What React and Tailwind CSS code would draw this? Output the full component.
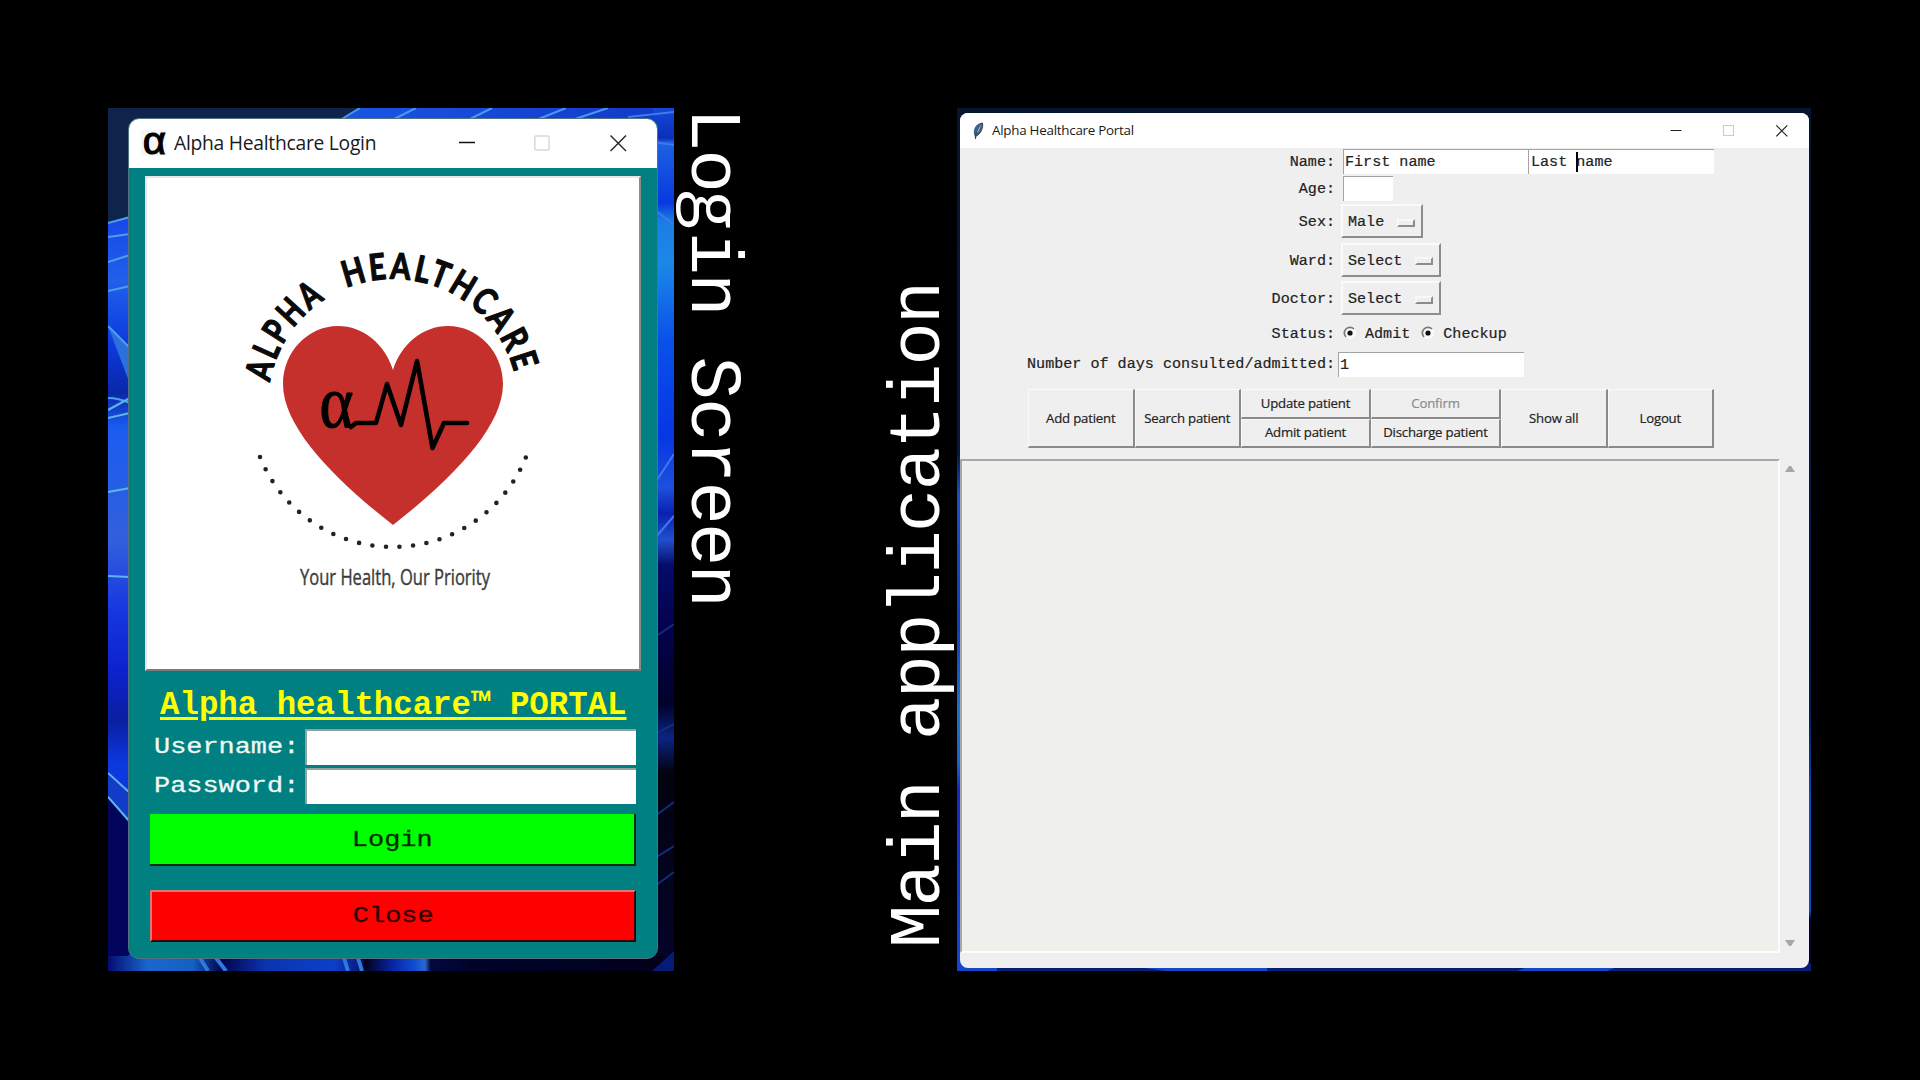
import React from "react";

const mono = "font-['Liberation_Mono',monospace]";
const sans = "font-['Open_Sans',sans-serif]";

function LoginWallpaper() {
  return (
    <svg className="absolute inset-0 h-full w-full" viewBox="0 0 566 863" preserveAspectRatio="none">
      <defs>
        <linearGradient id="wl" x1="0" y1="0" x2="0" y2="1">
          <stop offset="0.13" stopColor="#1748e8" />
          <stop offset="0.2" stopColor="#2060ea" />
          <stop offset="0.27" stopColor="#0d3be0" />
          <stop offset="0.33" stopColor="#0a28a8" />
          <stop offset="0.37" stopColor="#1a5cf0" />
          <stop offset="0.5" stopColor="#3260dc" />
          <stop offset="0.58" stopColor="#1738e0" />
          <stop offset="0.65" stopColor="#0c22d0" />
          <stop offset="0.71" stopColor="#0a1fa0" />
          <stop offset="0.76" stopColor="#0c38e0" />
        </linearGradient>
        <linearGradient id="wr" x1="0" y1="0" x2="0" y2="1">
          <stop offset="0" stopColor="#1448d8" />
          <stop offset="0.035" stopColor="#0b30b8" />
          <stop offset="0.04" stopColor="#1d62e0" />
          <stop offset="0.11" stopColor="#0838e0" />
          <stop offset="0.13" stopColor="#1b7de4" />
          <stop offset="0.18" stopColor="#1c88e6" />
          <stop offset="0.27" stopColor="#0a50ea" />
          <stop offset="0.38" stopColor="#0636e4" />
          <stop offset="0.44" stopColor="#1d50dc" />
          <stop offset="0.47" stopColor="#0a20b0" />
          <stop offset="0.5" stopColor="#2050d0" />
          <stop offset="0.53" stopColor="#050c68" />
          <stop offset="0.6" stopColor="#02024e" />
          <stop offset="0.69" stopColor="#01012c" />
          <stop offset="0.73" stopColor="#0a2480" />
          <stop offset="0.77" stopColor="#020210" />
          <stop offset="1" stopColor="#02042a" />
        </linearGradient>
        <linearGradient id="wt" x1="0" y1="0" x2="1" y2="0">
          <stop offset="0" stopColor="#1c70e8" />
          <stop offset="0.4" stopColor="#1a55e6" />
          <stop offset="1" stopColor="#1238c8" />
        </linearGradient>
        <linearGradient id="wb" x1="0" y1="0" x2="1" y2="0">
          <stop offset="0" stopColor="#040c70" />
          <stop offset="0.07" stopColor="#1a66cc" />
          <stop offset="0.15" stopColor="#1560c4" />
          <stop offset="0.2" stopColor="#02044c" />
          <stop offset="0.28" stopColor="#0a34b0" />
          <stop offset="0.4" stopColor="#0c40c8" />
          <stop offset="0.44" stopColor="#0a1c88" />
          <stop offset="0.455" stopColor="#01011c" />
          <stop offset="0.5" stopColor="#0822a0" />
          <stop offset="0.54" stopColor="#104ad0" />
          <stop offset="0.56" stopColor="#2a68d0" />
          <stop offset="0.57" stopColor="#03083c" />
          <stop offset="0.65" stopColor="#01012a" />
          <stop offset="1" stopColor="#01011a" />
        </linearGradient>
      </defs>
      <rect width="566" height="863" fill="#02044e" />
      <rect x="0" y="0" width="30" height="863" fill="url(#wl)" />
      <path d="M0 0H30V106L0 115Z" fill="#0e244a" />
      <path d="M0 689L30 720V840L0 863Z" fill="#03045c" />
      <path d="M0 665L24 684V716L0 690Z" fill="#123cc8" />
      <path d="M0 218L22 240V276Z" fill="#2b70dc" />
      <g stroke="#4f9fe8" strokeWidth="2" fill="none">
        <path d="M0 115L22 109M0 129L22 126M0 154L22 147M0 183L22 178M0 218L22 240M0 290Q10 290 22 295" />
        <path d="M0 302L22 290M0 310L22 305M0 384L22 380M0 468L22 469M0 665L22 685M0 689L22 714" stroke="#5cb6ec" />
      </g>
      <rect x="0" y="0" width="566" height="14" fill="url(#wt)" />
      <path d="M0 0H250L232 14H0Z" fill="#0e244a" />
      <path d="M252 0L232 12M308 0L284 12M384 0L360 12M458 0L428 12M500 0L464 12" stroke="#4a98f0" strokeWidth="2" />
      <rect x="545" y="0" width="21" height="863" fill="url(#wr)" />
      <g stroke="#3f7ae8" strokeWidth="2" fill="none">
        <path d="M520 9L566 4M545 34L566 37M547 102L566 117M547 375L566 346M547 430L566 408" />
        <path d="M547 529L566 516M547 626L566 616M547 708L566 694M547 750L566 738M547 778L566 764" stroke="#142a7c" />
      </g>
      <rect x="0" y="848" width="566" height="15" fill="url(#wb)" />
      <path d="M92 850L100 863M108 850L118 863M236 850L240 863M250 850L254 863" stroke="#2f78dc" strokeWidth="4" />
      <path d="M544 863L566 843V863Z" fill="#061a78" />
    </svg>
  );
}

function Controls({ big }) {
  return big ? (
    <svg className="h-[50px] w-[200px]" viewBox="457 118 200 50">
      <path d="M459 142.5H475" stroke="#111" strokeWidth="1.4" />
      <rect x="534.8" y="136" width="14.2" height="14" rx="1" fill="none" stroke="#d8d8d8" strokeWidth="1.5" />
      <path d="M610.5 135.5L626 151M626 135.5L610.5 151" stroke="#222" strokeWidth="1.4" />
    </svg>
  ) : (
    <svg className="h-[35px] w-[149px]" viewBox="1660 113 149 35">
      <path d="M1670.5 130.5H1681.5" stroke="#222" strokeWidth="1.1" />
      <rect x="1723.5" y="125.5" width="10" height="10" fill="none" stroke="#ccc" strokeWidth="1.1" />
      <path d="M1776.3 125.3L1787.3 136.3M1787.3 125.3L1776.3 136.3" stroke="#222" strokeWidth="1.2" />
    </svg>
  );
}

function Logo() {
  return (
    <svg className="block h-full w-full" viewBox="147 177 492 491">
      <defs>
        <path id="arcA" d="M269.9 381.3A125 125 0 0 1 328.7 295.9" />
        <path id="arcH" d="M346.2 287.1A125 125 0 0 1 515.6 377" />
      </defs>
      <g fontFamily="Lato" fontWeight="700" fontSize="36" letterSpacing="3.5" fill="#0a0a0a" stroke="#0a0a0a" strokeWidth="1.3" strokeLinejoin="round">
        <text textLength="105" lengthAdjust="spacingAndGlyphs">
          <textPath href="#arcA" textLength="105" lengthAdjust="spacingAndGlyphs">ALPHA</textPath>
        </text>
        <text textLength="215" lengthAdjust="spacingAndGlyphs">
          <textPath href="#arcH" textLength="215" lengthAdjust="spacingAndGlyphs">HEALTHCARE</textPath>
        </text>
      </g>
      <path
        d="M393 369C385 343 363 325 338 325C308 325 283 351 283 383C283 428 338 481 393 524C448 481 503 428 503 383C503 351 478 325 448 325C423 325 401 343 393 369Z"
        fill="#c5302c"
      />
      <text x="319.5" y="426" fontFamily="Liberation Serif" fontSize="74" textLength="34" lengthAdjust="spacingAndGlyphs" stroke="#000" strokeWidth="1.2">
        α
      </text>
      <path d="M351 426L356 422H376L387 383L401 424L417 360L432.5 447L444 422H467" fill="none" stroke="#000" strokeWidth="4.6" strokeLinecap="round" strokeLinejoin="round" />
      <path d="M260 456A143.3 143.3 0 0 0 526 456" fill="none" stroke="#222" strokeWidth="4.6" strokeLinecap="round" strokeDasharray="0 13.6" />
      <text x="300" y="584" fontFamily="Open Sans" fontSize="21" textLength="190" lengthAdjust="spacingAndGlyphs" fill="#3c3c3c" stroke="#3c3c3c" strokeWidth="0.4">
        Your Health, Our Priority
      </text>
    </svg>
  );
}

function CourierText({ children, className = "" }) {
  return (
    <span className={`inline-block scale-x-[1.18] whitespace-pre text-[22.8px] leading-none [-webkit-text-stroke:0.3px] ${mono} ${className}`}>{children}</span>
  );
}

function Field({ label }) {
  return (
    <div className="flex h-[39px] items-center">
      <label className="w-[155px] pt-px pl-1 text-[#f0f8f4]">
        <CourierText className="origin-left">{label}</CourierText>
      </label>
      <div className="h-[36px] w-[331px] border-t-2 border-l-2 border-[#8fa3a3] bg-white" />
    </div>
  );
}

function LoginWindow() {
  return (
    <div className="relative h-[863px] w-[566px] shrink-0 pt-[10px] pl-[20px]">
      <LoginWallpaper />
      <div className="relative h-[841px] w-[530px] overflow-hidden rounded-[11px] border border-[#4d7480] bg-[#008080]">
        <div className="-mx-px -mt-px flex h-[50px] items-center bg-white">
          <svg className="ml-[13px] h-[26px] w-[25px] overflow-visible" viewBox="0 0 25 26">
            <rect width="25" height="26" fill="#f7f7f7" />
            <text x="1" y="24" fontFamily="Liberation Mono" fontSize="39" textLength="24" lengthAdjust="spacingAndGlyphs" fill="#000" stroke="#000" strokeWidth="1.2">
              α
            </text>
          </svg>
          <span className={`ml-[8px] text-[19.3px] leading-none tracking-[-0.27px] text-[#1a1a1a] ${sans}`}>Alpha Healthcare Login</span>
          <span className="mr-px ml-auto">
            <Controls big />
          </span>
        </div>
        <div className="mt-[8px] ml-[16px] h-[495px] w-[496px] border-2 border-t-[#e6e6e6] border-r-[#8a8a8a] border-b-[#7a7a7a] border-l-[#e6e6e6] bg-white">
          <Logo />
        </div>
        <div className={`mt-[12px] ml-[31px] h-[44px] text-[32.4px] leading-[45px] font-bold whitespace-pre text-[#ffff00] underline decoration-[3px] underline-offset-[3px] ${mono}`}>
          Alpha healthcare™ PORTAL
        </div>
        <div className="ml-[21px]">
          <Field label="Username:" />
          <Field label="Password:" />
        </div>
        <div className="mt-[9px] ml-[21px] flex h-[52px] w-[486px] items-center justify-center border-r-2 border-b-2 border-[#032b06] bg-[#00ff00] pt-[2px] text-[#052b05]">
          <CourierText>Login</CourierText>
        </div>
        <div className="mt-[24px] ml-[21px] flex h-[52px] w-[486px] items-center justify-center border-2 border-t-[#d87878] border-r-[#300404] border-b-[#300404] border-l-[#d87878] bg-[#ff0000] text-[#300000]">
          <CourierText>Close</CourierText>
        </div>
      </div>
    </div>
  );
}

function Entry({ width, children }) {
  return (
    <div className={`flex h-[25px] items-center border-t border-l border-[#a3a3a3] bg-white pt-[2px] pl-px ${width}`}>{children}</div>
  );
}

function Row({ label, height, children }) {
  return (
    <div className={`flex items-center ${height}`}>
      <label className="w-[375px] pt-[3px] text-right whitespace-pre">{label}</label>
      {children}
    </div>
  );
}

function Select({ children, width }) {
  return (
    <div className={`ml-[6px] flex h-[34px] items-center justify-between border-2 border-t-[#fafafa] border-r-[#8c8c8c] border-b-[#8c8c8c] border-l-[#fafafa] pt-[3px] pr-[6px] pl-[5px] ${width}`}>
      {children}
      <span className="h-[8px] w-[18px] border-2 border-t-[#f8f8f8] border-r-[#8c8c8c] border-b-[#8c8c8c] border-l-[#f8f8f8]" />
    </div>
  );
}

function Radio({ children }) {
  return (
    <span className="flex items-center">
      <svg className="mr-[8px] h-[14px] w-[14px]" viewBox="0 0 14 14">
        <circle cx="7" cy="7" r="5.5" fill="#f8f8f8" stroke="#fff" />
        <path d="M3 11A5.5 5.5 0 0 1 11 3" fill="none" stroke="#777" strokeWidth="1.7" />
        <circle cx="7" cy="7" r="2.6" fill="#111" />
      </svg>
      <span className="pt-[3px]">{children}</span>
    </span>
  );
}

function Btn({ children, className = "" }) {
  return (
    <button className={`flex items-center justify-center border-t border-r-2 border-b-2 border-l border-t-[#fafafa] border-r-[#8a8a8a] border-b-[#8a8a8a] border-l-[#fafafa] ${className}`}>
      {children}
    </button>
  );
}

function Arrow({ down }) {
  return (
    <svg className="h-[8px] w-[10px]" viewBox="0 0 10 8">
      <path d={down ? "M0 1H10L6 7H4Z" : "M0 7H10L6 1H4Z"} fill="#a6a6a6" />
    </svg>
  );
}

function PortalWindow() {
  return (
    <div className="relative h-[863px] w-[854px] shrink-0 pt-[5px] pl-[3px]">
      <svg className="absolute inset-0 h-full w-full" viewBox="0 0 854 863">
        <defs>
          <linearGradient id="pw" x1="0" y1="0" x2="0" y2="1">
            <stop offset="0" stopColor="#03152f" />
            <stop offset="0.4" stopColor="#06183c" />
            <stop offset="0.45" stopColor="#1a4fd0" />
            <stop offset="0.6" stopColor="#103cc0" />
            <stop offset="0.7" stopColor="#1c72d4" />
            <stop offset="0.76" stopColor="#1c60d0" />
            <stop offset="0.79" stopColor="#1028d0" />
            <stop offset="1" stopColor="#1248d8" />
          </linearGradient>
          <linearGradient id="pr" x1="0" y1="0" x2="0" y2="1">
            <stop offset="0" stopColor="#03152f" />
            <stop offset="0.7" stopColor="#041c50" />
            <stop offset="0.8" stopColor="#0a4cc0" />
            <stop offset="0.93" stopColor="#0a4cc0" />
            <stop offset="0.94" stopColor="#05052c" />
          </linearGradient>
        </defs>
        <rect width="854" height="863" fill="#03152f" />
        <rect width="5" height="863" fill="url(#pw)" />
        <rect x="849" y="5" width="5" height="858" fill="url(#pr)" />
        <rect y="855" width="854" height="8" fill="#061f74" />
        <path d="M0 855H40V863H0ZM210 863H310V859H180ZM560 863H650L660 859H570Z" fill="#1448c8" />
      </svg>
      <div className={`relative flex h-[855px] w-[849px] flex-col overflow-hidden rounded-[8px] bg-[#efefef] text-[15.1px] leading-none text-[#222] [-webkit-text-stroke:0.2px] ${mono}`}>
        <div className="flex h-[35px] shrink-0 items-center bg-white [-webkit-text-stroke:0]">
          <svg className="ml-[12px] h-[18px] w-[12px]" viewBox="0 0 12 18">
            <path d="M10.5 0.5C5 1 1 6 2 12L3.5 17L4.5 14C9 12 11 6 10.5 0.5Z" fill="#3f6288" />
            <path d="M9.5 2C6 4 4 8 4 12L7 9Z" fill="#7fabdb" />
            <path d="M10 1C6 5 4 9 3.5 17M10.5 1C11.5 6 9 11 4.5 14" fill="none" stroke="#26323f" strokeWidth="0.9" />
          </svg>
          <span className={`ml-[8px] text-[13.4px] tracking-[-0.26px] text-[#1a1a1a] ${sans}`}>Alpha Healthcare Portal</span>
          <span className="ml-auto">
            <Controls />
          </span>
        </div>
        <Row label="Name:" height="h-[27px]">
          <div className="ml-[8px] flex">
            <Entry width="w-[185px]">First name</Entry>
            <Entry width="w-[186px]">
              <span className="pl-px whitespace-pre">Last </span>
              <span className="-mt-[2px] -mr-[2px] h-[20px] w-[2px] bg-black" />
              name
            </Entry>
          </div>
        </Row>
        <Row label="Age:" height="h-[27px]">
          <div className="ml-[8px]">
            <Entry width="w-[50px]" />
          </div>
        </Row>
        <Row label="Sex:" height="h-[38.5px]">
          <Select width="w-[82px]">Male</Select>
        </Row>
        <Row label="Ward:" height="h-[38.5px]">
          <Select width="w-[100px]">Select</Select>
        </Row>
        <Row label="Doctor:" height="h-[38.5px]">
          <Select width="w-[100px]">Select</Select>
        </Row>
        <Row label="Status:" height="h-[31.5px]">
          <div className="ml-[8px] flex gap-[11px]">
            <Radio>Admit</Radio>
            <Radio>Checkup</Radio>
          </div>
        </Row>
        <Row label="Number of days consulted/admitted:" height="h-[29px]">
          <div className="mt-px ml-[3px]">
            <Entry width="w-[186px]">1</Entry>
          </div>
        </Row>
        <div className={`mt-[11px] ml-[68px] grid h-[59px] w-[686px] shrink-0 grid-cols-[106.5px_106.5px_130px_130px_106.5px_106.5px] grid-rows-2 text-[13.2px] tracking-[-0.2px] ${sans}`}>
          <Btn className="row-span-2 pt-px">Add patient</Btn>
          <Btn className="row-span-2 pt-px">Search patient</Btn>
          <Btn>Update patient</Btn>
          <Btn className="text-[#8c8c8c]">Confirm</Btn>
          <Btn className="row-span-2 pt-px">Show all</Btn>
          <Btn className="row-span-2 pt-px">Logout</Btn>
          <Btn>Admit patient</Btn>
          <Btn>Discharge patient</Btn>
        </div>
        <div className="mt-[11px] flex h-[494px] shrink-0">
          <div className="w-[820px] border-2 border-t-[#a8a8a8] border-r-[#fcfcfc] border-b-[#fcfcfc] border-l-[#a8a8a8] bg-[#eff0eb]" />
          <div className="ml-[5px] flex flex-col justify-between py-[6px]">
            <Arrow />
            <Arrow down />
          </div>
        </div>
      </div>
    </div>
  );
}

function Caption({ children, className }) {
  return (
    <div className={`w-[83px] shrink-0 text-[72px] leading-[83px] tracking-[-1.6px] whitespace-pre text-white [writing-mode:vertical-rl] ${mono} ${className}`}>{children}</div>
  );
}

export default function App() {
  return (
    <div className="flex h-[1080px] w-[1920px] items-start overflow-hidden bg-black pt-[108px] pl-[108px]">
      <LoginWindow />
      <Caption className="-ml-[5px]">
        Lo<span className="relative left-[9px] font-['Open_Sans'] text-[70px] tracking-[2.5px]">g</span>in Screen
      </Caption>
      <Caption className="mr-[-5px] ml-[127px] h-[840px] rotate-180">Main application</Caption>
      <PortalWindow />
    </div>
  );
}
